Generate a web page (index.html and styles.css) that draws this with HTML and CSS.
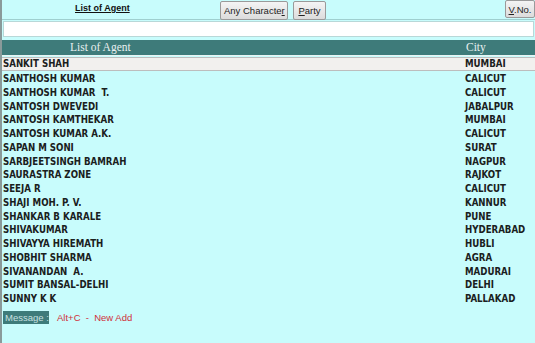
FILE: index.html
```html
<!DOCTYPE html>
<html lang="en">
<head>
  <meta charset="UTF-8">
  <title>List of Agent</title>
  <link rel="stylesheet" href="styles.css">
</head>
<body>
  <div class="screen">
    <div class="topbar">
      <span class="title">List of Agent</span>
      <button class="btn btn-any">Any Characte<u>r</u></button>
      <button class="btn btn-party"><u>P</u>arty</button>
      <button class="btn btn-vno"><u>V</u>.No.</button>
    </div>
    <div class="search"><input type="text"></div>
    <div class="head">
      <span class="col-name">List of Agent</span>
      <span class="col-city">City</span>
    </div>
    <div class="rows">
      <div class="row selected"><span class="col-name">SANKIT SHAH</span><span class="col-city">MUMBAI</span></div>
      <div class="row"><span class="col-name">SANTHOSH KUMAR</span><span class="col-city">CALICUT</span></div>
      <div class="row"><span class="col-name">SANTHOSH KUMAR&nbsp; T.</span><span class="col-city">CALICUT</span></div>
      <div class="row"><span class="col-name">SANTOSH DWEVEDI</span><span class="col-city">JABALPUR</span></div>
      <div class="row"><span class="col-name">SANTOSH KAMTHEKAR</span><span class="col-city">MUMBAI</span></div>
      <div class="row"><span class="col-name">SANTOSH KUMAR A.K.</span><span class="col-city">CALICUT</span></div>
      <div class="row"><span class="col-name">SAPAN M SONI</span><span class="col-city">SURAT</span></div>
      <div class="row"><span class="col-name">SARBJEETSINGH BAMRAH</span><span class="col-city">NAGPUR</span></div>
      <div class="row"><span class="col-name">SAURASTRA ZONE</span><span class="col-city">RAJKOT</span></div>
      <div class="row"><span class="col-name">SEEJA R</span><span class="col-city">CALICUT</span></div>
      <div class="row"><span class="col-name">SHAJI MOH. P. V.</span><span class="col-city">KANNUR</span></div>
      <div class="row"><span class="col-name">SHANKAR B KARALE</span><span class="col-city">PUNE</span></div>
      <div class="row"><span class="col-name">SHIVAKUMAR</span><span class="col-city">HYDERABAD</span></div>
      <div class="row"><span class="col-name">SHIVAYYA HIREMATH</span><span class="col-city">HUBLI</span></div>
      <div class="row"><span class="col-name">SHOBHIT SHARMA</span><span class="col-city">AGRA</span></div>
      <div class="row"><span class="col-name">SIVANANDAN&nbsp; A.</span><span class="col-city">MADURAI</span></div>
      <div class="row"><span class="col-name">SUMIT BANSAL-DELHI</span><span class="col-city">DELHI</span></div>
      <div class="row"><span class="col-name">SUNNY K K</span><span class="col-city">PALLAKAD</span></div>
    </div>
    <div class="message">
      <span class="msg-label">Message :</span>
      <span class="msg-text">Alt+C&nbsp; -&nbsp; New Add</span>
    </div>
  </div>
</body>
</html>
```
FILE: styles.css
```css
html, body {
  margin: 0;
  padding: 0;
}
body {
  background-color: #c8fcfc;
  font-family: "DejaVu Sans", Verdana, sans-serif;
}
.screen {
  width: 535px;
  height: 343px;
  border-left: 2px solid #8a9a9a;
  box-sizing: border-box;
  overflow: hidden;
}
.topbar {
  height: 19px;
  display: flex;
  align-items: flex-start;
  border-bottom: 1px solid #9fcfcf;
}
.title {
  margin-left: 73px;
  margin-top: 3px;
  width: 145px;
  font-family: "Liberation Sans", Arial, sans-serif;
  font-size: 9px;
  font-weight: bold;
  text-decoration: underline;
  color: #111;
}
.btn {
  height: 19px;
  padding: 0 3px;
  margin: 1px 0 0 0;
  font-family: "Liberation Sans", Arial, sans-serif;
  font-size: 9.5px;
  color: #222;
  white-space: nowrap;
  background: linear-gradient(#f4f4f4, #dcdcdc);
  border: 1px solid #9a9a9a;
  border-radius: 2px;
}
.btn-any {
  width: 68px;
}
.btn-party {
  margin-left: 5px;
  width: 33px;
}
.btn-vno {
  margin-left: auto;
  margin-top: 0;
  height: 18px;
  width: 30px;
  padding: 0 2px;
}
.search {
  padding: 0 1px 0 1px;
}
.search input {
  display: block;
  width: 100%;
  height: 16px;
  box-sizing: border-box;
  border: 1px solid #b8d8d8;
  background: #fff;
  margin-top: 1px;
}
.head {
  display: flex;
  height: 15px;
  margin-top: 3px;
  background-color: #3e7b7a;
  color: #e8f0f0;
  font-family: "Liberation Serif", "Times New Roman", serif;
  font-size: 11.5px;
  line-height: 15px;
  border-bottom: 1px solid #e8f4f4;
}
.head .col-name {
  padding-left: 68px;
  width: 396px;
}
.rows {
  margin-top: 1px;
}
.row {
  display: flex;
  height: 13.75px;
  line-height: 13.75px;
  font-family: "DejaVu Sans Condensed", "DejaVu Sans", sans-serif;
  font-weight: bold;
  font-size: 9.6px;
  color: #1a2020;
}
.row .col-name {
  width: 462px;
  padding-left: 1px;
}
.row.selected {
  background-color: #f2f0ee;
  border-top: 1px solid #bdbdbd;
  border-bottom: 1px solid #bdbdbd;
  height: 12px;
  line-height: 12px;
  margin-bottom: 1px;
}
.message {
  display: flex;
  align-items: center;
  margin-top: 5px;
  padding-left: 1px;
  font-family: "Liberation Sans", Arial, sans-serif;
  font-size: 9.5px;
}
.msg-label {
  background-color: #3e7b7a;
  color: #c8e0e0;
  padding: 1px 2px;
  width: 46px;
  box-sizing: border-box;
  white-space: nowrap;
}
.msg-text {
  margin-left: 8px;
  color: #d0303a;
}
```
